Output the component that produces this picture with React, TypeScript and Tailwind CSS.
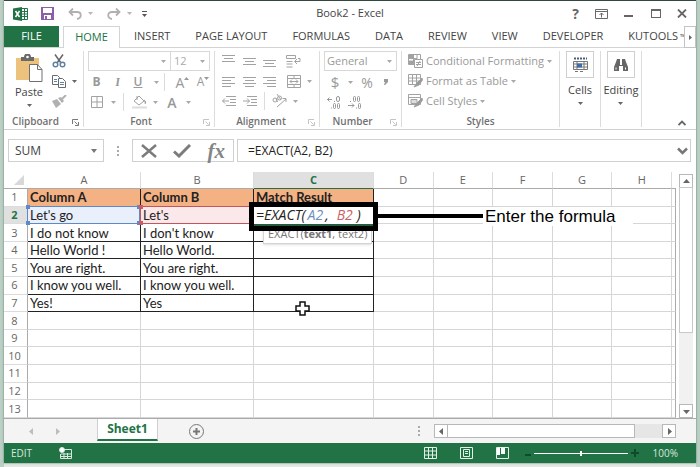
import { useState, type ReactNode } from 'react';
import { clsx } from 'clsx';

const TABS = ['INSERT', 'PAGE LAYOUT', 'FORMULAS', 'DATA', 'REVIEW', 'VIEW', 'DEVELOPER'];
const COLS = ['A', 'B', 'C', 'D', 'E', 'F', 'G', 'H'];
const ROWS = [
  ['Column A', 'Column B', 'Match Result'],
  ["Let's go", "Let's", ''],
  ['I do not know', "I don't know", ''],
  ['Hello World !', 'Hello World.', ''],
  ['You are right.', 'You are right.', ''],
  ['I know you well.', 'I know you well.', ''],
  ['Yes!', 'Yes', ''],
  [],
  [],
  [],
  [],
  [],
  [],
];

function Caret({ className = 'fill-[#a8a8a8]' }: { className?: string }) {
  return (
    <svg width="5" height="3" viewBox="0 0 5 3" className={clsx('shrink-0', className)}>
      <path d="M0 0h5L2.5 3z" />
    </svg>
  );
}

function Tool({ label, className, children }: { label: string; className?: string; children: ReactNode }) {
  return (
    <button type="button" aria-label={label} className={clsx('flex h-5 shrink-0 items-center justify-center', className)}>
      {children}
    </button>
  );
}

function Lines({ rows, className }: { rows: [number, number, number][]; className?: string }) {
  return (
    <svg width="14" height="14" viewBox="0 0 14 14" className={clsx('stroke-[#a2a2a2]', className)}>
      {rows.map(([x1, x2, y]) => (
        <path key={y} d={`M${x1} ${y}H${x2}`} />
      ))}
    </svg>
  );
}

function Launcher({ className = 'stroke-[#c4c4c4]' }: { className?: string }) {
  return (
    <svg width="7" height="7" viewBox="0 0 7 7" fill="none" className={className}>
      <path d="M.5 5V.5H6M2.5 2.5l3 3M6.5 3v3.500H3" />
    </svg>
  );
}

function Group({
  title,
  className,
  launcher,
  children,
}: {
  title: string;
  className: string;
  launcher?: ReactNode;
  children: ReactNode;
}) {
  return (
    <section aria-label={title} className={clsx('flex shrink-0 flex-col border-r border-[#dcdcdc]', className)}>
      <div className="h-16">{children}</div>
      <div
        className={clsx(
          'relative flex h-3 items-center justify-center text-[10px] font-semibold leading-3 text-[#707070]',
          launcher && 'pr-4',
        )}
      >
        {title}
        {launcher && (
          <button type="button" aria-label={`${title} settings`} className="absolute right-1 top-1">
            {launcher}
          </button>
        )}
      </div>
    </section>
  );
}

function TitleBar() {
  return (
    <header className="flex h-[26px] shrink-0 items-center border-t border-[#33483c] pl-[9px] pr-[9px] text-[#444]">
      <div className="flex flex-1 items-center">
        <svg width="15" height="14" viewBox="0 0 15 14">
          <path fill="#fff" stroke="#217346" d="M8 1.500h6.500v11H8z" />
          <path stroke="#217346" d="M9 4.500h5M9 7h5M9 9.500h5M11.500 2v10" />
          <path fill="#217346" d="M0 1.500 9 0v14l-9-1.500z" />
          <path stroke="#fff" strokeWidth="1.500" d="m2.500 4 4 6M6.500 4l-4 6" />
        </svg>
        <button type="button" aria-label="Save" className="ml-[13px]">
          <svg width="13" height="13" viewBox="0 0 13 13">
            <path fill="#8a5fa8" d="M0 0h13v13H0z" />
            <path fill="#fff" d="M2 1h9v5H2zM3 8h7v4H3z" />
            <path fill="#8a5fa8" d="M4 9h2v3H4z" />
          </svg>
        </button>
        <button type="button" aria-label="Undo" className="ml-3.5 flex items-center gap-1.5">
          <svg width="14" height="12" viewBox="0 0 14 12" fill="none" stroke="#b0b0b0" strokeWidth="1.800">
            <path d="M5 .5 1.500 4 5 7.500M1.500 4H9c5 0 5 6 0 7" />
          </svg>
          <Caret className="fill-[#b8b8b8]" />
        </button>
        <button type="button" aria-label="Redo" className="ml-3.5 flex items-center gap-1.5">
          <svg width="14" height="12" viewBox="0 0 14 12" fill="none" stroke="#b0b0b0" strokeWidth="1.800">
            <path d="M9 .5 12.500 4 9 7.500M12.500 4H5c-5 0-5 6 0 7" />
          </svg>
          <Caret className="fill-[#b8b8b8]" />
        </button>
        <button type="button" aria-label="Customize toolbar" className="ml-2.5 flex flex-col items-center gap-0.5">
          <span className="h-px w-[5px] bg-[#555]" />
          <Caret className="fill-[#555]" />
        </button>
      </div>
      <h1 className="text-[11px]">Book2 - Excel</h1>
      <div className="flex flex-1 items-center justify-end gap-4">
        <button type="button" aria-label="Help" className="text-[14px] font-bold leading-4 text-[#666]">
          ?
        </button>
        <button type="button" aria-label="Ribbon options">
          <svg width="13" height="10" viewBox="0 0 13 10" fill="none" stroke="#6a6a6a">
            <path d="M.5.500h12v9H.5zM.5 2.500h12M6.500 8.500V4M4.500 6l2-2 2 2" />
          </svg>
        </button>
        <button type="button" aria-label="Minimize" className="pt-1">
          <span className="block h-0.5 w-[9px] bg-[#666]" />
        </button>
        <button type="button" aria-label="Maximize" className="ml-0.5">
          <span className="block h-[9px] w-2.5 border border-t-2 border-[#666]" />
        </button>
        <button type="button" aria-label="Close">
          <svg width="10" height="9" viewBox="0 0 10 9" stroke="#666" strokeWidth="1.800">
            <path d="m1 .5 8 8M9 .5l-8 8" />
          </svg>
        </button>
      </div>
    </header>
  );
}

function TabStrip() {
  return (
    <nav className="flex h-[22px] shrink-0 items-stretch border-b border-[#d4d4d4] text-[11px] text-[#444]">
      <button type="button" className="w-[55px] bg-[#217346] text-white">
        FILE
      </button>
      <button type="button" className="-mb-px ml-1 w-[57px] border border-b-0 border-[#d4d4d4] bg-white text-[#217346]">
        HOME
      </button>
      <div className="flex min-w-0 flex-1 items-center gap-[25px] overflow-hidden whitespace-nowrap pl-3.5">
        {TABS.map((t) => (
          <button key={t} type="button">
            {t}
          </button>
        ))}
        <button type="button">
          KUTOOLS<span className="ml-0.5 text-[8px]">™</span>
        </button>
      </div>
      <button
        type="button"
        aria-label="More tabs"
        className="-mb-px flex w-3 shrink-0 items-center justify-center border border-[#c4c4c4] bg-white"
      >
        <svg width="3" height="5" viewBox="0 0 3 5" fill="#666">
          <path d="M0 0v5l3-2.500z" />
        </svg>
      </button>
    </nav>
  );
}

function ClipboardGroup() {
  return (
    <Group title="Clipboard" className="w-20" launcher={<Launcher className="stroke-[#777]" />}>
      <div className="flex pl-2.5">
        <button type="button" className="flex w-[30px] flex-col items-center pt-[3px] text-[11px] leading-4 text-[#444]">
          <svg width="27" height="28" viewBox="0 0 27 28">
            <path fill="#edc27c" d="M0 4h23v22H0z" />
            <path fill="#6a6a6a" d="M5 3h3a3.500 3.500 0 0 1 7 0h3v4H5z" />
            <circle cx="11.500" cy="3" r="1.300" fill="#fff" />
            <path fill="#fff" stroke="#707070" d="M13.500 10.500h8l4.500 5v12H13.500z" />
            <path fill="none" stroke="#707070" d="M21.500 10.500v5H26" />
          </svg>
          <span className="mt-0.5">Paste</span>
          <Caret className="mt-1 fill-[#666]" />
        </button>
        <div className="ml-1 flex flex-col">
          <Tool label="Cut" className="w-[22px]">
            <svg width="14" height="14" viewBox="0 0 14 14" fill="none" strokeWidth="1.500">
              <path stroke="#666" d="m3 .5 6 8.500M11 .5 5 9" />
              <circle cx="3.500" cy="10.500" r="2.300" stroke="#5f82a6" />
              <circle cx="10.500" cy="10.500" r="2.300" stroke="#5f82a6" />
            </svg>
          </Tool>
          <div className="flex">
            <Tool label="Copy" className="w-[22px]">
              <svg width="14" height="13" viewBox="0 0 14 13" fill="#fff" stroke="#6a6a6a">
                <path d="M.5.500h5l2 2v7h-7z" />
                <path d="M6.500 3.500h4l3 3v6h-7z" />
                <path stroke="#5f82a6" d="M2 4.500h3M2 6.500h3M8 7.500h4M8 9.500h4" />
              </svg>
            </Tool>
            <Tool label="Copy options" className="w-2">
              <Caret className="fill-[#666]" />
            </Tool>
          </div>
          <Tool label="Format Painter" className="w-[22px]">
            <svg width="15" height="13" viewBox="0 0 15 13">
              <path fill="#b0b0b0" d="m0 6 5-2 4 5-5 4zM6 3l3-1 3 4-2 2z" />
              <path stroke="#b0b0b0" strokeWidth="2" d="m10 4 4-4" />
            </svg>
          </Tool>
        </div>
      </div>
    </Group>
  );
}

function FontGroup() {
  return (
    <Group title="Font" className="w-[131px]" launcher={<Launcher />}>
      <div className="mb-px flex h-5 pl-1 pr-1 text-[11px] text-[#aaa]">
        <div className="relative flex w-[83px] items-center border border-[#d8d8d8]">
          <select aria-label="Font" disabled className="w-full appearance-none px-1">
            <option></option>
          </select>
          <Caret className="absolute right-1 fill-[#a8a8a8]" />
        </div>
        <div className="relative -ml-px flex w-10 items-center border border-[#d8d8d8]">
          <select aria-label="Font size" disabled className="w-full appearance-none px-[3px]">
            <option>12</option>
          </select>
          <Caret className="absolute right-1 fill-[#a8a8a8]" />
        </div>
      </div>
      <div className="flex h-5 items-center pl-0.5 text-[12px] text-[#999]">
        <Tool label="Bold" className="w-[21px] font-bold">B</Tool>
        <Tool label="Italic" className="w-[21px] font-serif font-bold italic">I</Tool>
        <Tool label="Underline" className="w-5 font-semibold underline">U</Tool>
        <Tool label="Underline options" className="w-4"><Caret /></Tool>
        <span className="h-[18px] w-px bg-[#dcdcdc]" />
        <Tool label="Grow font" className="ml-[7px] w-[21px] text-[14px]">
          A<Caret className="mb-2 rotate-180 fill-[#999]" />
        </Tool>
        <Tool label="Shrink font" className="w-5 text-[12px]">
          A<Caret className="mb-2 fill-[#999]" />
        </Tool>
      </div>
      <div className="flex h-5 items-center pl-0.5 text-[#999]">
        <Tool label="Borders" className="w-[21px]">
          <svg width="12" height="12" viewBox="0 0 12 12" fill="none" stroke="#a2a2a2">
            <path d="M.5.500h11v11H.5zM6 .5v11M.5 6h11" />
          </svg>
        </Tool>
        <Tool label="Border options" className="w-3"><Caret /></Tool>
        <span className="ml-1 h-[18px] w-px bg-[#dcdcdc]" />
        <Tool label="Fill color" className="ml-1 w-[22px]">
          <svg width="15" height="14" viewBox="0 0 15 14" fill="none" stroke="#a2a2a2">
            <path d="m2 6 5-5 5 5-5 4zM5 1v4" />
            <path fill="#a2a2a2" d="M12 5c2 1 2 3 1 4" />
            <path stroke="#ddd" strokeWidth="2" d="M0 12.500h15" />
          </svg>
        </Tool>
        <Tool label="Fill options" className="w-2.5"><Caret /></Tool>
        <Tool label="Font color" className="w-6 text-[14px] font-semibold">A</Tool>
        <Tool label="Font color options" className="w-2"><Caret /></Tool>
      </div>
    </Group>
  );
}

function AlignmentGroup() {
  return (
    <Group title="Alignment" className="w-[105px] pl-1" launcher={<Launcher />}>
      <div className="flex h-5">
        <Tool label="Top align" className="w-5"><Lines rows={[[0, 13, 3.5], [2, 11, 6.5], [0, 13, 9.5]]} className="mb-1" /></Tool>
        <Tool label="Middle align" className="w-[21px]"><Lines rows={[[0, 13, 4.5], [2, 11, 7.5], [0, 13, 10.5]]} /></Tool>
        <Tool label="Bottom align" className="w-5"><Lines rows={[[0, 13, 4.5], [2, 11, 7.5], [0, 13, 10.5]]} className="mt-1" /></Tool>
        <Tool label="Wrap text" className="w-[27px]">
          <svg width="15" height="14" viewBox="0 0 15 14" fill="none" stroke="#a2a2a2">
            <path d="M.5 1.500h9v3h-9zM.5 7.500h6M.5 10h6M.5 13h6M12 4.500h2v3H9M11 5 8.500 7.500 11 10" />
          </svg>
        </Tool>
      </div>
      <div className="flex h-5">
        <Tool label="Align left" className="w-5"><Lines rows={[[0, 13, 3.5], [0, 9, 6.5], [0, 13, 9.5], [0, 9, 12.5]]} /></Tool>
        <Tool label="Center" className="w-[21px]"><Lines rows={[[0, 13, 3.5], [2, 11, 6.5], [0, 13, 9.5], [2, 11, 12.5]]} /></Tool>
        <Tool label="Align right" className="w-5"><Lines rows={[[0, 13, 3.5], [4, 13, 6.5], [0, 13, 9.5], [4, 13, 12.5]]} /></Tool>
        <Tool label="Merge and center" className="w-[27px]">
          <svg width="14" height="13" viewBox="0 0 14 13" fill="none" stroke="#a2a2a2">
            <path d="M.5.500h13v12H.5zM.5 3.500h13M.5 9.500h13M7 .5v3M7 9.500v3M3 6.500h8M5 4.500l-2 2 2 2M9 4.500l2 2-2 2" />
          </svg>
        </Tool>
        <Tool label="Merge options" className="w-1"><Caret /></Tool>
      </div>
      <div className="flex h-5 items-center">
        <Tool label="Decrease indent" className="w-5">
          <svg width="14" height="12" viewBox="0 0 14 12" fill="none" stroke="#a2a2a2">
            <path d="M4 1.500h10M8 4.500h6M8 7.500h6M4 10.500h10M7 6H.5M3 3.500.5 6 3 8.500" />
          </svg>
        </Tool>
        <Tool label="Increase indent" className="w-[21px]">
          <svg width="14" height="12" viewBox="0 0 14 12" fill="none" stroke="#a2a2a2">
            <path d="M4 1.500h10M8 4.500h6M8 7.500h6M4 10.500h10M0 6h6.500M4 3.500 6.500 6 4 8.500" />
          </svg>
        </Tool>
        <span className="ml-1 h-[18px] w-px bg-[#dcdcdc]" />
        <Tool label="Orientation" className="w-7">
          <svg width="15" height="14" viewBox="0 0 15 14" fill="none" stroke="#a2a2a2">
            <circle cx="3" cy="6" r="2" />
            <circle cx="7.500" cy="4" r="2" />
            <path d="M4 4.500 5.500 8M5 0l4 6M5 13l9-8M10.500 4.500H14V8" />
          </svg>
        </Tool>
        <Tool label="Orientation options" className="w-1"><Caret /></Tool>
      </div>
    </Group>
  );
}

function DecimalIcon({ grow }: { grow?: boolean }) {
  return (
    <svg width="15" height="13" viewBox="0 0 15 13" fill="none" stroke="#999">
      {grow ? (
        <path d="M0 3.500h5M2.500 1.500.5 3.500l2 2M7 5.500h1M4 12h1" />
      ) : (
        <path d="M2 5.500h1M0 9.500h6M4 7.500l2 2-2 2M8 12h1" />
      )}
      {grow ? (
        <>
          <rect x="9.500" y=".5" width="3" height="5" rx="1.500" />
          <rect x="6.500" y="7.500" width="2" height="5" rx="1" />
          <rect x="10.500" y="7.500" width="2" height="5" rx="1" />
        </>
      ) : (
        <>
          <rect x="5.500" y=".5" width="2" height="5" rx="1" />
          <rect x="9.500" y=".5" width="2" height="5" rx="1" />
          <rect x="10.500" y="7.500" width="2" height="5" rx="1" />
        </>
      )}
    </svg>
  );
}

function NumberGroup() {
  return (
    <Group title="Number" className="w-[82px]" launcher={<Launcher />}>
      <div className="mx-1 mb-px flex h-5 items-center border border-[#d8d8d8] pr-1 text-[11px] text-[#999]">
        <select aria-label="Number format" disabled className="min-w-0 flex-1 appearance-none pl-0.5">
          <option>General</option>
        </select>
        <Caret />
      </div>
      <div className="flex h-5 items-center pl-1 text-[15px] text-[#999]">
        <Tool label="Accounting format" className="w-[22px]">$</Tool>
        <Tool label="Accounting options" className="w-2"><Caret /></Tool>
        <Tool label="Percent style" className="w-[26px] text-[14px]">%</Tool>
        <Tool label="Comma style" className="w-3">
          <svg width="4" height="6" viewBox="0 0 4 6" fill="#999">
            <path d="M0 0h4v3L1 6H0l1-3H0z" />
          </svg>
        </Tool>
      </div>
      <div className="flex h-5 items-center pl-1">
        <Tool label="Increase decimal" className="w-[21px]"><DecimalIcon grow /></Tool>
        <Tool label="Decrease decimal" className="w-[21px]"><DecimalIcon /></Tool>
      </div>
    </Group>
  );
}

function StyleIcon({ kind }: { kind: number }) {
  return (
    <svg width="15" height="14" viewBox="0 0 15 14" fill="none" stroke="#a2a2a2">
      <path d="M.5.500h12v10H.5z" />
      {kind === 0 && (
        <>
          <path fill="#a2a2a2" d="M1 1h4v3H1zM1 7h5v3H1z" />
          <path d="M5.500 1v6M9 1v4M1 4.500h8" />
          <path fill="#fff" d="M6.500 5.500h8v8h-8z" />
          <path d="M8 8.500h5M8 10.500h5M12 7l-3 5" />
        </>
      )}
      {kind === 1 && <path d="M.5 4h12M.5 7h12M4.500.500v10M8.500.500v10" />}
      {kind === 2 && <path fill="#ddd" d="M.5 3.500h12M3 5.500h6v4H3z" />}
      {kind > 0 && <path fill="#999" d="m14 4-5 5-3 4 5-2 3.500-5z" />}
    </svg>
  );
}

function StylesGroup() {
  return (
    <Group title="Styles" className="w-[158px]">
      {['Conditional Formatting', 'Format as Table', 'Cell Styles'].map((label, i) => (
        <button key={label} type="button" className="flex h-5 items-center whitespace-nowrap pl-1.5 text-[11px] text-[#999]">
          <StyleIcon kind={i} />
          <span className="mx-[3px]">{label}</span>
          <Caret />
        </button>
      ))}
    </Group>
  );
}

function BigButton({ label, children }: { label: string; children: ReactNode }) {
  return (
    <div className="flex w-[41px] shrink-0 justify-center border-r border-[#dcdcdc]">
      <button type="button" className="flex flex-col items-center self-start text-[11px] text-[#444]">
        <span className="flex h-[27px] w-7 items-center justify-center border border-[#cfcfcf]">{children}</span>
        <span className="mt-1 leading-4">{label}</span>
        <Caret className="mt-1 fill-[#666]" />
      </button>
    </div>
  );
}

function Ribbon() {
  return (
    <div className="flex h-[82px] shrink-0 border-b border-[#d0d0d0] pb-0.5 pt-[3px]">
      <ClipboardGroup />
      <FontGroup />
      <AlignmentGroup />
      <NumberGroup />
      <StylesGroup />
      <BigButton label="Cells">
        <svg width="15" height="15" viewBox="0 0 15 15" fill="none" stroke="#777">
          <path stroke="#44617f" strokeWidth="2" strokeDasharray="2 1" d="M1 1.500h13" />
          <path d="M.5 4.500h14v8H.5zM.5 7h14M.5 10h14M4 4.500v8M11 4.500v8M2 14.500h3M7 14.500h3" />
          <path fill="#3f6cab" d="M4 6.500h5v4H4z" stroke="none" />
        </svg>
      </BigButton>
      <BigButton label="Editing">
        <svg width="14" height="12" viewBox="0 0 14 12" fill="#666">
          <path d="M3 0h3v3h2V0h3l1 3 2 5v4H9V7H5v5H0V8l2-5z" />
          <path stroke="#fff" d="M6.500 3v3M2 8.500v2M11.500 8.500v2M7.500 3v3" />
        </svg>
      </BigButton>
      <div className="flex flex-1 items-end justify-end pr-2.5">
        <button type="button" aria-label="Collapse ribbon" className="mb-px">
          <svg width="8" height="6" viewBox="0 0 8 6" fill="none" stroke="#666" strokeWidth="1.800">
            <path d="m.5 5 3.500-3.500L7.500 5" />
          </svg>
        </button>
      </div>
    </div>
  );
}

function Grip() {
  return (
    <span className="flex flex-col gap-0.5">
      <i className="size-0.5 bg-[#aaa]" />
      <i className="size-0.5 bg-[#aaa]" />
      <i className="size-0.5 bg-[#aaa]" />
    </span>
  );
}

function FormulaBar() {
  const [formula, setFormula] = useState('=EXACT(A2, B2)');
  return (
    <div className="flex shrink-0 items-center pb-2.5 pl-1 pr-[5px] pt-[9px] text-[#444]">
      <div className="flex h-[23px] w-24 items-center border border-[#d0d0d0] pr-1.5">
        <input aria-label="Name box" defaultValue="SUM" className="w-full min-w-0 pl-1.5 text-[12px] outline-none" />
        <button type="button" aria-label="Names">
          <svg width="6" height="4" viewBox="0 0 6 4" fill="#777">
            <path d="M0 0h6L3 4z" />
          </svg>
        </button>
      </div>
      <div className="flex w-7 justify-center">
        <Grip />
      </div>
      <div className="flex h-[23px] w-[102px] items-center justify-between border border-[#d0d0d0] px-2">
        <button type="button" aria-label="Cancel">
          <svg width="16" height="14" viewBox="0 0 16 14" fill="none" stroke="#7c7c7c" strokeWidth="2.500">
            <path d="m1 1 14 12M15 1 1 13" />
          </svg>
        </button>
        <button type="button" aria-label="Enter">
          <svg width="18" height="14" viewBox="0 0 18 14" fill="none" stroke="#7c7c7c" strokeWidth="3">
            <path d="m1 7.500 5 4.500L17 1" />
          </svg>
        </button>
        <button
          type="button"
          aria-label="Insert function"
          className="font-['Liberation_Serif',serif] text-[21px] font-bold italic leading-5 text-[#858585]"
        >
          fx
        </button>
      </div>
      <div className="ml-[3px] flex h-[23px] flex-1 items-center border border-[#d0d0d0] pr-0.5">
        <input
          aria-label="Formula"
          value={formula}
          onChange={(e) => setFormula(e.target.value)}
          className="min-w-0 flex-1 pl-2.5 text-[12px] text-[#222] outline-none"
        />
        <button type="button" aria-label="Expand formula bar">
          <svg width="11" height="8" viewBox="0 0 11 8" fill="none" stroke="#777" strokeWidth="2.500">
            <path d="m1 1.500 4.500 4.500L10 1.500" />
          </svg>
        </button>
      </div>
    </div>
  );
}

// In-cell editor with its argument hint and the callout beside it
function FormulaEditor() {
  return (
    <div className="absolute -left-[5px] -top-[5px] z-20 flex items-center whitespace-nowrap">
      <div className="absolute left-3.5 top-[23px] -z-10 h-[19px] border border-[#d4d4d4] bg-white px-1 font-['Open_Sans',sans-serif] text-[11px] leading-4 text-[#777] shadow">
        EXACT(<b className="font-bold">text1</b>, text2)
      </div>
      <div className="h-[29px] w-[129px] border-[5px] border-black bg-white">
        <div className="flex h-[19px] items-center border-b-2 border-[#215c3c] pl-0.5 font-['Open_Sans',sans-serif] text-[14px] italic leading-4 text-[#222]">
          =EXACT( <span className="ml-0.5 text-[#6b8fc0]">A2</span>
          <span className="ml-0.5">,</span>
          <span className="ml-2 text-[#cc5f66]">B2</span>
          <span className="ml-1">)</span>
        </div>
      </div>
      <div className="h-1 w-[105px] bg-black" />
      <div className="w-[150px] bg-white pl-0.5 font-['Liberation_Sans',Arial,sans-serif] text-[17px] leading-[19px] text-black">
        Enter the formula
      </div>
    </div>
  );
}

function RefOutline({ color }: { color: 'blue' | 'red' }) {
  const dot = clsx('absolute size-1', color === 'blue' ? 'bg-[#5b8ac6]' : 'bg-[#cf5a62]');
  return (
    <span
      className={clsx(
        'absolute -bottom-px -left-px -top-px right-0 z-10 border',
        color === 'blue' ? 'border-[#5b8ac6]' : 'border-[#c5555a]',
      )}
    >
      <i className={clsx(dot, '-left-0.5 -top-0.5')} />
      <i className={clsx(dot, '-bottom-0.5 -left-0.5')} />
      <i className={clsx(dot, '-right-0.5 -top-0.5')} />
      <i className={clsx(dot, '-bottom-0.5 -right-0.5')} />
    </span>
  );
}

function Sheet() {
  return (
    <table className="h-full w-full table-fixed border-separate border-spacing-0 font-['Lato',sans-serif] text-[13px] leading-4 text-[#222]">
      <colgroup>
        <col className="w-6" />
        <col className="w-[113px]" />
        <col className="w-[113px]" />
        <col className="w-[120px]" />
        <col />
        <col />
        <col />
        <col />
        <col />
        <col className="w-1" />
      </colgroup>
      <thead>
        <tr className="h-[17px] font-['Open_Sans',sans-serif] text-[11px] text-[#666]">
          <th aria-label="Select all" className="border-b border-[#ababab] p-0">
            <svg width="10" height="10" viewBox="0 0 10 10" className="ml-2.5">
              <path fill="#d8d8d8" d="M10 0v10H0z" />
            </svg>
          </th>
          {COLS.map((c) => (
            <th
              key={c}
              className={clsx(
                'border-b border-r border-r-[#dcdcdc] p-0 leading-4',
                c === 'C' ? 'border-b-[#217346] bg-[#e0e0e0] font-bold text-[#217346]' : 'border-b-[#ababab] font-normal',
              )}
            >
              {c}
            </th>
          ))}
          <td className="border-b border-[#ababab] p-0" />
        </tr>
      </thead>
      <tbody>
        {ROWS.map((row, r) => (
          <tr key={r}>
            <th
              className={clsx(
                "border-b border-r border-b-[#dcdcdc] p-0 pr-0.5 font-['Open_Sans',sans-serif] text-[11px] leading-4",
                r === 1 ? 'border-r-[#217346] bg-[#e0e0e0] font-bold text-[#217346]' : 'border-r-[#ababab] font-normal text-[#666]',
              )}
            >
              {r + 1}
            </th>
            {COLS.map((c, i) => (
              <td
                key={c}
                className={clsx(
                  'relative border-b border-r p-0 pl-0.5 leading-4 whitespace-nowrap',
                  r < 7 && i < 3 ? 'border-[#222]' : 'border-[#d6d6d6]',
                  r === 0 && i < 3 && 'bg-[#f4b183] font-bold',
                  r === 1 && i === 0 && 'bg-[#e9effb]',
                  r === 1 && i === 1 && 'bg-[#fbe8ea]',
                )}
              >
                {row[i]}
                {r === 1 && i === 0 && <RefOutline color="blue" />}
                {r === 1 && i === 1 && <RefOutline color="red" />}
                {r === 1 && i === 2 && <FormulaEditor />}
                {r === 6 && i === 2 && (
                  <svg width="15" height="15" viewBox="0 0 15 15" className="absolute left-[41px] top-1.5 z-10">
                    <path fill="#fff" stroke="#111" strokeWidth="1.500" d="M5 1h5v4h4v5h-4v4H5v-4H1V5h4z" />
                  </svg>
                )}
              </td>
            ))}
            <td className="border-b border-r border-b-[#d6d6d6] border-r-[#ababab] p-0" />
          </tr>
        ))}
      </tbody>
    </table>
  );
}

function ScrollButton({ label, d, className }: { label: string; d: string; className?: string }) {
  return (
    <button
      type="button"
      aria-label={label}
      className={clsx('flex size-3.5 shrink-0 items-center justify-center border border-[#b8b8b8] bg-white', className)}
    >
      <svg width="7" height="7" viewBox="0 0 7 7" fill="#666">
        <path d={d} />
      </svg>
    </button>
  );
}

function SheetBar() {
  return (
    <div className="flex h-6 shrink-0 items-center bg-[#f4f4f4] pr-5">
      <button type="button" aria-label="Previous sheet" className="ml-[25px]">
        <svg width="4" height="7" viewBox="0 0 4 7" fill="#bdbdbd"><path d="M4 0v7L0 3.500z" /></svg>
      </button>
      <button type="button" aria-label="Next sheet" className="ml-[23px]">
        <svg width="4" height="7" viewBox="0 0 4 7" fill="#bdbdbd"><path d="M0 0v7l4-3.500z" /></svg>
      </button>
      <button
        type="button"
        className="ml-[37px] h-[22px] w-[61px] self-start border-x border-b-2 border-x-[#cfcfcf] border-b-[#217346] bg-white text-[12px] font-bold text-[#217346]"
      >
        Sheet1
      </button>
      <button type="button" aria-label="New sheet" className="ml-[31px]">
        <svg width="15" height="15" viewBox="0 0 15 15" fill="none" stroke="#777">
          <circle cx="7.500" cy="7.500" r="7" />
          <path strokeWidth="2" d="M7.500 4v7M4 7.500h7" />
        </svg>
      </button>
      <div className="ml-auto mr-3.5">
        <Grip />
      </div>
      <div className="flex h-3.5 w-[242px] bg-[#e6e6e6]">
        <ScrollButton label="Scroll left" d="M5 0v7L1 3.500z" />
        <div className="-ml-px w-[188px] border border-[#b8b8b8] bg-white" />
        <ScrollButton label="Scroll right" d="M2 0v7l4-3.500z" className="ml-auto" />
      </div>
    </div>
  );
}

function StatusBar() {
  return (
    <footer className="flex h-5 shrink-0 items-center bg-[#217346] pl-[7px] pr-[18px] text-[10px] text-[#d9e8df]">
      EDIT
      <button type="button" aria-label="Record macro" className="ml-[27px]">
        <svg width="13" height="12" viewBox="0 0 13 12" fill="none" stroke="#d9e8df">
          <path d="M5 2.500h7.500v9h-11V7M2 7h10M2 9.500h10M5 6v5M8.500 6v5" />
          <circle cx="3" cy="3" r="2.500" fill="#fff" />
        </svg>
      </button>
      <div className="ml-auto flex items-center">
        <button type="button" aria-label="Normal view">
          <svg width="13" height="12" viewBox="0 0 13 12" fill="none" stroke="#e4efe8">
            <path d="M.5.500h12v11H.5zM4.500.500v11M8.500.500v11M.5 4h12M.5 8h12" />
          </svg>
        </button>
        <button type="button" aria-label="Page layout view" className="ml-[23px]">
          <svg width="13" height="12" viewBox="0 0 13 12" fill="none" stroke="#e4efe8">
            <path d="M.5.500h12v11H.5zM3.500 2.500h6v7h-6zM5 4.500h3M5 6.500h3" />
          </svg>
        </button>
        <button type="button" aria-label="Page break view" className="ml-[23px]">
          <svg width="13" height="12" viewBox="0 0 13 12" fill="none" stroke="#e4efe8">
            <path d="M.5.500h12v11H.5z" />
            <path fill="#fff" stroke="none" d="M1 1h3v7H1zM5 1h4v6H5z" />
          </svg>
        </button>
        <button type="button" aria-label="Zoom out" className="ml-4 h-2">
          <span className="mt-[3px] block h-0.5 w-1.5 bg-[#0e4c29]" />
        </button>
        <input
          type="range"
          aria-label="Zoom"
          min="10"
          max="190"
          defaultValue="100"
          className="ml-[3px] h-px w-[94px] appearance-none bg-white [&::-webkit-slider-thumb]:h-[5px] [&::-webkit-slider-thumb]:w-0.5 [&::-webkit-slider-thumb]:appearance-none [&::-webkit-slider-thumb]:bg-white"
        />
        <button type="button" aria-label="Zoom in" className="ml-[3px]">
          <svg width="8" height="8" viewBox="0 0 8 8" stroke="#0e4c29" strokeWidth="2">
            <path d="M4 0v8M0 4h8" />
          </svg>
        </button>
        <span className="ml-3.5">100%</span>
      </div>
    </footer>
  );
}

export default function App() {
  return (
    <div className="h-screen overflow-hidden bg-[#bccfc4] px-1 font-['Open_Sans',sans-serif]">
      <div className="h-full bg-[#e4e8e5] pb-1">
        <main className="flex h-full flex-col bg-white shadow-[0_0_2px_#4f7d64]">
          <TitleBar />
          <TabStrip />
          <Ribbon />
          <FormulaBar />
          <div className="flex min-h-0 flex-1 overflow-hidden border-b border-[#ababab]">
            <div className="min-w-0 flex-1">
              <Sheet />
            </div>
            <div className="mx-[3px] mt-0.5 flex w-3.5 shrink-0 flex-col bg-[#f1f1f1]">
              <ScrollButton label="Scroll up" d="M0 5h7L3.500 1z" />
              <div className="-mt-px h-3/5 border border-[#c8c8c8] bg-white" />
              <ScrollButton label="Scroll down" d="M0 2h7L3.500 6z" className="mt-auto" />
            </div>
          </div>
          <SheetBar />
          <StatusBar />
        </main>
      </div>
    </div>
  );
}
